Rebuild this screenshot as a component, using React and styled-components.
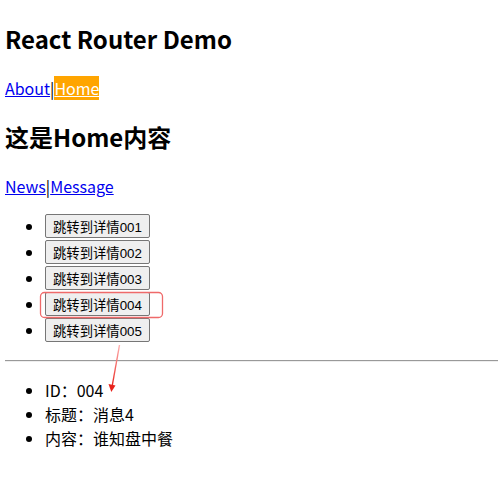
import React from 'react'
import styled, { createGlobalStyle } from 'styled-components'

const GlobalStyle = createGlobalStyle`
    body {
        margin: 2px 0 8px 5px;
        font-family: "Noto Sans CJK SC", "Noto Sans", sans-serif;
        font-size: 16px;
        color: #000;
        background: #fff;
    }
`

const messages = [
    { id: '001', title: '消息1' },
    { id: '002', title: '消息2' },
    { id: '003', title: '消息3' },
    { id: '004', title: '消息4' },
    { id: '005', title: '消息5' },
]

function App() {
    return (
        <Page>
            <GlobalStyle />
            <Title>React Router Demo</Title>
            <Nav>
                <NavLink href="#about">About</NavLink>|<NavLink href="#home" active>Home</NavLink>
            </Nav>
            <Title>这是Home内容</Title>
            <Nav>
                <NavLink href="#news">News</NavLink>|<NavLink href="#message">Message</NavLink>
            </Nav>
            <List>
                {messages.map(m => (
                    <Item key={m.id}>
                        <JumpButton>跳转到详情{m.id}</JumpButton>
                    </Item>
                ))}
            </List>
            <Rule />
            <List>
                <DetailItem>ID：004</DetailItem>
                <DetailItem>标题：消息4</DetailItem>
                <DetailItem>内容：谁知盘中餐</DetailItem>
            </List>

            {/* screenshot annotation: highlight box + arrow */}
            <Annotation width="498" height="478" viewBox="0 0 498 478">
                <defs>
                    <linearGradient id="arrowFade" x1="0" y1="0" x2="0" y2="1">
                        <stop offset="0" stopColor="#ffb0b0" />
                        <stop offset="1" stopColor="#e8221b" />
                    </linearGradient>
                </defs>
                <rect x="40.5" y="292.5" width="122" height="25" rx="4" fill="none" stroke="#ef6a6a" strokeWidth="1.3" />
                <line x1="119.5" y1="345" x2="112" y2="387" stroke="url(#arrowFade)" strokeWidth="1.4" />
                <path d="M108.5 384 L111.3 392 L115.5 385.5 Z" fill="#e8221b" />
            </Annotation>
        </Page>
    )
}

export default App

const Page = styled.div``

const Title = styled.h2`
    font-size: 24px;
    font-weight: bold;
    margin: 19px 0 20px;
`

const Nav = styled.div`
    margin: 16px 0;
`

const NavLink = styled.a`
    color: ${p => p.active ? '#fff' : '#0000ee'};
    background: ${p => p.active ? 'orange' : 'transparent'};
    text-decoration: underline;
`

const List = styled.ul`
    margin: 16px 0;
    padding-left: 40px;
`

const Item = styled.li`
    height: 26px;
`

const JumpButton = styled.button`
    font-family: "Liberation Sans", "Noto Sans CJK SC", sans-serif;
    font-size: 13.333px;
    height: 24px;
    padding: 0 7px;
    background: #efefef;
    color: #000;
    border: 1px solid #767676;
    border-radius: 2px;
    vertical-align: top;
`

const Rule = styled.hr`
    margin: 9px 0 10px;
    border: none;
    border-top: 1px solid #999;
    border-bottom: 1px solid #eee;
`

const DetailItem = styled.li`
    line-height: 24px;
`

const Annotation = styled.svg`
    position: fixed;
    left: 0;
    top: 0;
    pointer-events: none;
`
